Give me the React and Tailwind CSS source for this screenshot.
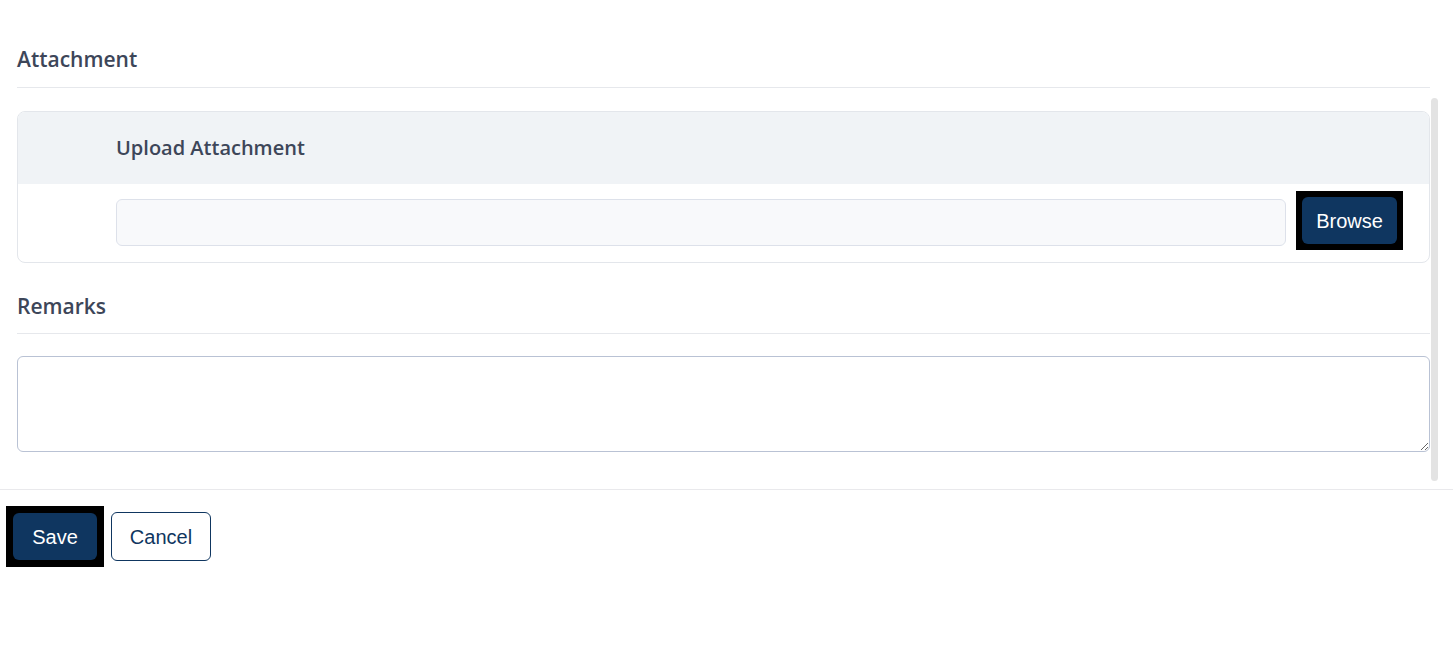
export default function App() {
  const heading = "font-['Open_Sans',sans-serif] text-[21px] font-semibold text-[#3d4659]";
  return (
    <main className="relative min-h-[648px] bg-white">
      <div className="h-[490px] border-b border-[#e9e9ec] pl-[17px] pr-[23px] pt-[45px]">
        <h2 className={`${heading} leading-[28px]`}>Attachment</h2>
        <div className="mt-[14px] h-px bg-[#e6e8ec]" />

        <section className="mt-[23px] overflow-hidden rounded-lg border border-[#e3e6eb]">
          <div className="flex h-[72px] items-center bg-[#f0f3f6] pl-[98px]">
            <span className="font-['Open_Sans',sans-serif] text-[20px] font-semibold text-[#3d4659]">Upload Attachment</span>
          </div>
          <div className="flex items-start gap-[10px] pb-[12px] pl-[98px] pr-[26px] pt-[7px]">
            <div className="mt-[8px] h-[47px] flex-1 rounded-md border border-[#dde1ea] bg-[#f8f9fb]" />
            <div className="bg-black p-[6px]">
              <button className="block h-[47px] w-[95px] rounded-md bg-[#0f3660] font-['Liberation_Sans',sans-serif] text-[20px] text-white">
                Browse
              </button>
            </div>
          </div>
        </section>

        <h2 className={`${heading} mt-[29px] leading-[28px]`}>Remarks</h2>
        <div className="mt-[13px] h-px bg-[#e6e8ec]" />
        <textarea className="mt-[22px] block h-[96px] w-full rounded-md border border-[#b9c2d4] bg-white outline-none" />
      </div>

      <div className="absolute left-[1431px] top-[98px] h-[383px] w-[7px] rounded-full bg-[#e3e3e3]" />

      <div className="flex items-center gap-[7px] pl-[6px] pt-[16px]">
        <div className="bg-black p-[7px]">
          <button className="block h-[47px] w-[84px] rounded-md bg-[#0f3660] font-['Liberation_Sans',sans-serif] text-[20px] text-white">
            Save
          </button>
        </div>
        <button className="h-[49px] w-[100px] rounded-md border border-[#0f3660] bg-white font-['Liberation_Sans',sans-serif] text-[20px] text-[#0f3660]">
          Cancel
        </button>
      </div>
    </main>
  );
}
